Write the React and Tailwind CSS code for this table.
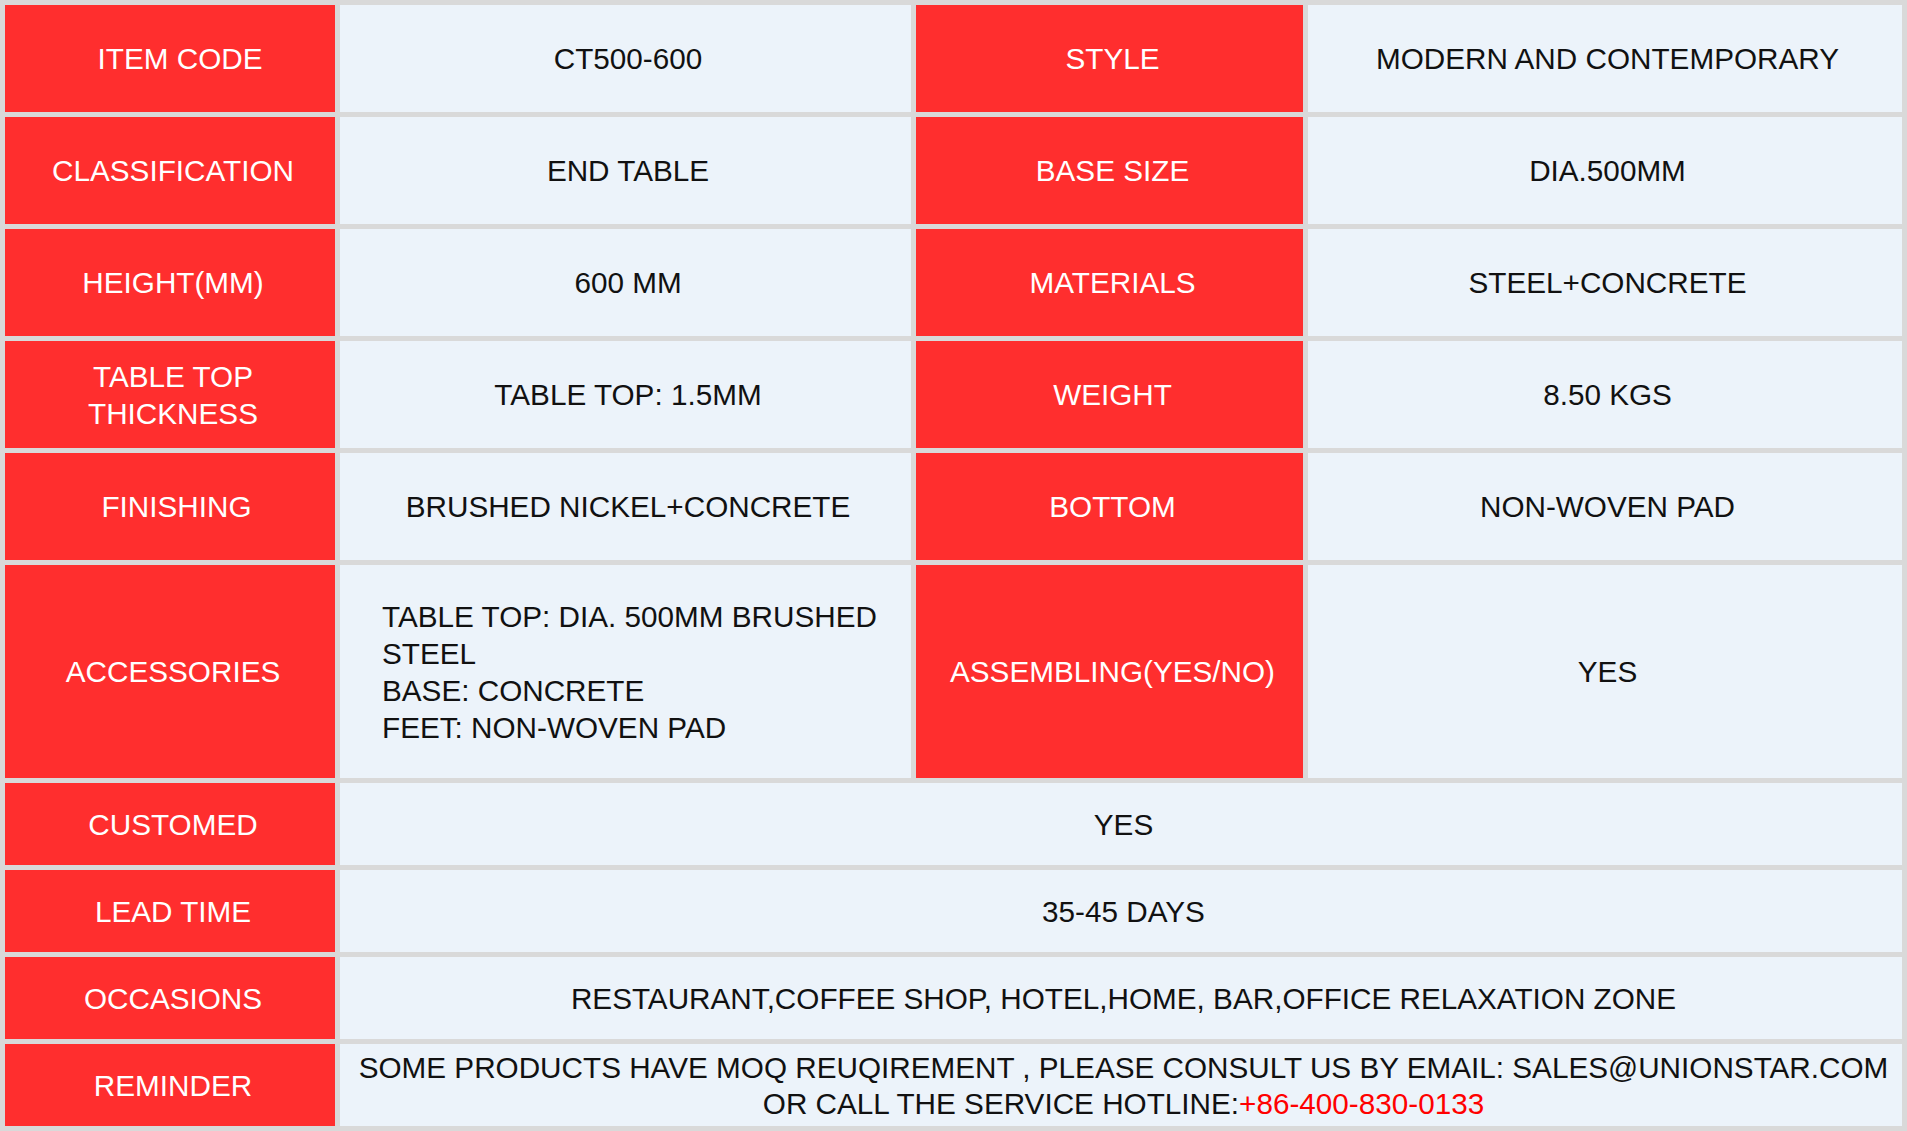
const rows = [
  ['ITEM CODE', 'CT500-600', 'STYLE', 'MODERN AND CONTEMPORARY'],
  ['CLASSIFICATION', 'END TABLE', 'BASE SIZE', 'DIA.500MM'],
  ['HEIGHT(MM)', '600 MM', 'MATERIALS', 'STEEL+CONCRETE'],
  [['TABLE TOP', 'THICKNESS'], 'TABLE TOP: 1.5MM', 'WEIGHT', '8.50 KGS'],
  ['FINISHING', 'BRUSHED NICKEL+CONCRETE', 'BOTTOM', 'NON-WOVEN PAD'],
];

const wide = [
  ['CUSTOMED', 'YES'],
  ['LEAD TIME', '35-45 DAYS'],
  ['OCCASIONS', 'RESTAURANT,COFFEE SHOP, HOTEL,HOME, BAR,OFFICE RELAXATION ZONE'],
];

// a couple of labels sit a little right of centre in the source sheet
const nudge = {
  'ITEM CODE': 'pl-[20px]',
  FINISHING: 'pl-[13px]',
};

const Label = ({ children, className = '' }) => (
  <div
    className={`flex items-center justify-center text-center bg-[#ff2e2e] text-white pt-[2px] ${
      nudge[children] || 'pl-[6px]'
    } ${className}`}
  >
    <div>
      {Array.isArray(children)
        ? children.map((line) => <div key={line}>{line}</div>)
        : children}
    </div>
  </div>
);

const Value = ({ children, className = '' }) => (
  <div className={`flex items-center justify-center text-center bg-[#ecf3fa] text-[#111] pl-[5px] pt-[2px] ${className}`}>
    {children}
  </div>
);

export default function App() {
  return (
    <div
      className="w-[1907px] h-[1131px] bg-[#d9d9d9] p-[5px] grid gap-[5px] grid-cols-[330px_571px_387px_594px] grid-rows-[107px_107px_107px_107px_107px_213px_82px_82px_82px_82px] text-[29.7px] leading-[36.5px]"
      style={{ fontFamily: '"Liberation Sans", Arial, sans-serif' }}
    >
      {rows.map((r, i) => (
        <div key={i} className="contents">
          <Label>{r[0]}</Label>
          <Value>{r[1]}</Value>
          <Label>{r[2]}</Label>
          <Value>{r[3]}</Value>
        </div>
      ))}

      <Label>ACCESSORIES</Label>
      <div className="flex flex-col justify-center bg-[#ecf3fa] text-[#111] pl-[42px] pr-[10px] leading-[37px]">
        <div>TABLE TOP: DIA. 500MM BRUSHED STEEL</div>
        <div>BASE: CONCRETE</div>
        <div>FEET: NON-WOVEN PAD</div>
      </div>
      <Label>ASSEMBLING(YES/NO)</Label>
      <Value>YES</Value>

      {wide.map(([k, v]) => (
        <div key={k} className="contents">
          <Label>{k}</Label>
          <Value className="col-span-3">{v}</Value>
        </div>
      ))}

      <Label>REMINDER</Label>
      <Value className="col-span-3 flex-col">
        <div className="whitespace-nowrap">
          SOME PRODUCTS HAVE MOQ REUQIREMENT , PLEASE CONSULT US BY EMAIL: SALES@UNIONSTAR.COM
        </div>
        <div className="whitespace-nowrap">
          OR CALL THE SERVICE HOTLINE:<span className="text-[#ff0000]">+86-400-830-0133</span>
        </div>
      </Value>
    </div>
  );
}
